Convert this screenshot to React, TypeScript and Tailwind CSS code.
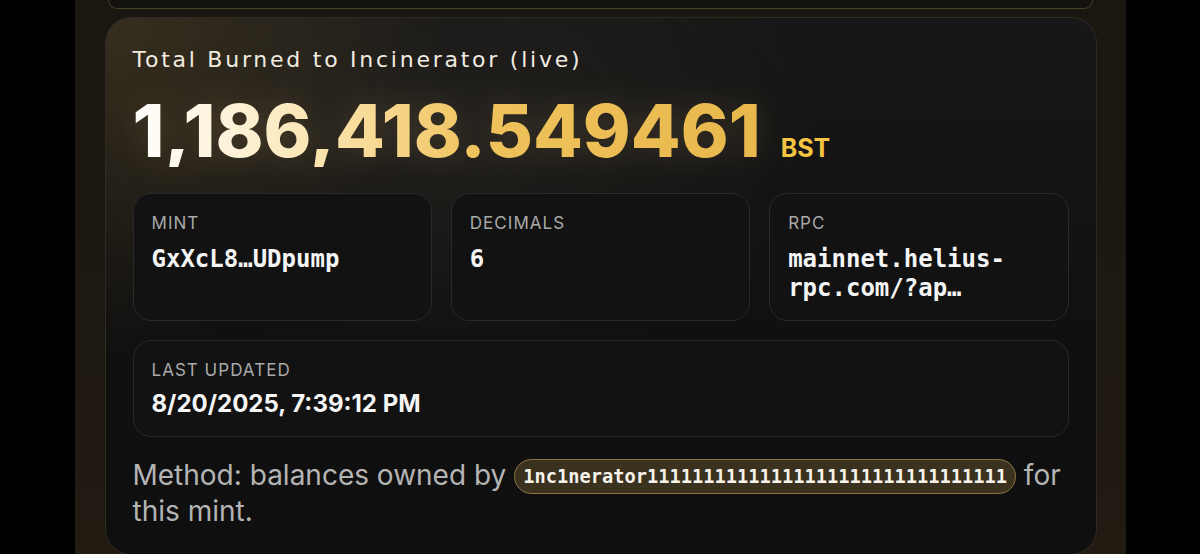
import React from "react";

export default function App() {
  const boxes = [
    { label: "MINT", value: "GxXcL8…UDpump" },
    { label: "DECIMALS", value: "6" },
    { label: "RPC", value: "mainnet.helius-rpc.com/?ap…" },
  ];
  return (
    <div className="w-[1200px] h-[554px] bg-black overflow-hidden flex justify-center">
      <div className="w-[1051px] h-full flex flex-col bg-[linear-gradient(180deg,#1a1610_0%,#1d1811_50%,#211b12_100%)]">
        <div className="mx-[33px] h-[9px] shrink-0 rounded-b-[20px] bg-[#14120e] border-x border-b border-[#4d3f25]" />
        <div className="mt-[8px] ml-[30px] mr-[29px] rounded-[26px] border border-[#2e2b25] bg-[radial-gradient(circle_at_0%_0%,rgba(130,100,45,0.30),transparent_30%),radial-gradient(ellipse_at_35%_22%,rgba(60,55,45,0.30),transparent_40%),linear-gradient(180deg,#171717_0%,#101010_60%,#0f0f0f_100%)] pt-[29px] px-[27px] pb-[25px]">
          <div
            className="text-[22px] leading-[26px] text-[#f2ece0] tracking-[0.125em]"
            style={{ fontFamily: '"DejaVu Sans", sans-serif' }}
          >
            Total Burned to Incinerator (live)
          </div>
          <div className="mt-[22px] flex items-baseline gap-[20px]">
            <span
              className="text-[72.5px] leading-[72px] font-extrabold bg-[linear-gradient(90deg,#ffffff_0%,#fdf0d2_18%,#f8da95_38%,#efc25c_55%,#e8b84c_100%)] bg-clip-text text-transparent drop-shadow-[0_0_16px_rgba(240,200,120,0.16)]"
              style={{ fontFamily: "Inter, sans-serif" }}
            >
              1,186,418.549461
            </span>
            <span
              className="text-[25px] font-bold text-[#f5c443]"
              style={{ fontFamily: "Inter, sans-serif" }}
            >
              BST
            </span>
          </div>
          <div className="mt-[25px] grid grid-cols-3 gap-[19px]">
            {boxes.map((b) => (
              <div
                key={b.label}
                className="h-[128px] rounded-[18px] border border-[#292929] bg-[#121212] pt-[19px] px-[18px]"
              >
                <div
                  className="text-[17px] leading-[20px] tracking-[0.06em] text-[#a9a9a9]"
                  style={{ fontFamily: "Inter, sans-serif" }}
                >
                  {b.label}
                </div>
                <div
                  className="mt-[12px] text-[24px] leading-[29px] font-bold text-[#f4f4f4]"
                  style={{ fontFamily: '"DejaVu Sans Mono", monospace' }}
                >
                  {b.value}
                </div>
              </div>
            ))}
          </div>
          <div className="mt-[19px] rounded-[18px] border border-[#292929] bg-[#121212] pt-[19px] pb-[18px] px-[18px]">
            <div
              className="text-[17px] leading-[20px] tracking-[0.06em] text-[#a9a9a9]"
              style={{ fontFamily: "Inter, sans-serif" }}
            >
              LAST UPDATED
            </div>
            <div
              className="mt-[10px] text-[24px] leading-[28px] font-bold text-[#f6f6f6]"
              style={{ fontFamily: "Inter, sans-serif" }}
            >
              8/20/2025, 7:39:12 PM
            </div>
          </div>
          <div
            className="mt-[21px] text-[28px] leading-[35px] text-[#b4b4b4]"
            style={{ fontFamily: "Inter, sans-serif" }}
          >
            <span className="whitespace-nowrap">
              Method: balances owned by{" "}
              <span
                className="inline-flex items-center align-middle h-[35px] px-[8px] rounded-full border-[1.5px] border-[#8e7541] bg-[#3a311f] text-[18.7px] font-bold text-[#f7f3ea]"
                style={{ fontFamily: '"DejaVu Sans Mono", monospace' }}
              >
                1nc1nerator11111111111111111111111111111111
              </span>{" "}
              for
            </span>
            <br />
            this mint.
          </div>
        </div>
      </div>
    </div>
  );
}
